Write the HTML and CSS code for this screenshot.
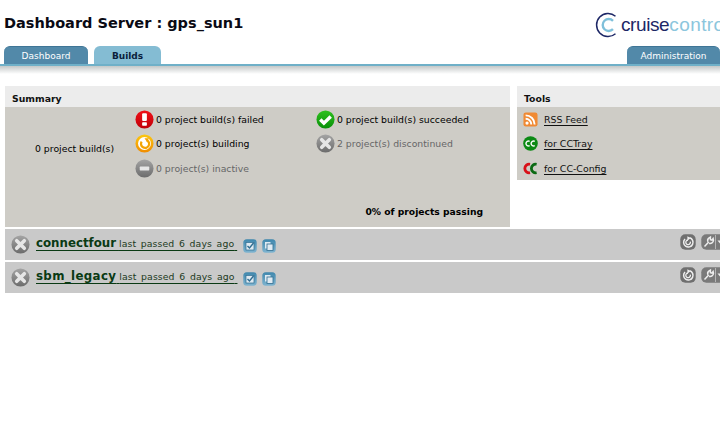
FILE: index.html
```html
<!DOCTYPE html>
<html lang="en">
<head>
<meta charset="utf-8">
<title>Dashboard Server : gps_sun1</title>
<link rel="stylesheet" href="styles.css">
</head>
<body>
<svg class="defs" width="0" height="0" aria-hidden="true">
  <defs>
    <linearGradient id="gRed" x1="0" y1="0" x2="0" y2="1"><stop offset="0" stop-color="#f01018"/><stop offset="1" stop-color="#c00008"/></linearGradient>
    <linearGradient id="gGreen" x1="0" y1="0" x2="0" y2="1"><stop offset="0" stop-color="#30c020"/><stop offset="1" stop-color="#089008"/></linearGradient>
    <linearGradient id="gOrange" x1="0" y1="0" x2="0" y2="1"><stop offset="0" stop-color="#fcc810"/><stop offset="1" stop-color="#f08c00"/></linearGradient>
    <linearGradient id="gGrey" x1="0" y1="0" x2="0" y2="1"><stop offset="0" stop-color="#a4a4a4"/><stop offset="1" stop-color="#6c6c6c"/></linearGradient>
    <linearGradient id="gBlue" x1="0" y1="0" x2="0" y2="1"><stop offset="0" stop-color="#3f87ad"/><stop offset="1" stop-color="#7fb4d0"/></linearGradient>
    <symbol id="i-fail" viewBox="0 0 20 20"><circle cx="10" cy="10" r="9.5" fill="url(#gRed)"/><rect x="7.500" y="3.500" width="5" height="8" rx="1" fill="#fff"/><rect x="7.500" y="13" width="5" height="3.500" rx=".8" fill="#fff"/></symbol>
    <symbol id="i-ok" viewBox="0 0 20 20"><circle cx="10" cy="10" r="9.5" fill="url(#gGreen)"/><path d="M4.500 10l3.800 3.800L15.500 6.800" fill="none" stroke="#fff" stroke-width="3.600"/></symbol>
    <symbol id="i-build" viewBox="0 0 20 20"><circle cx="10" cy="10" r="9.5" fill="url(#gOrange)"/><circle cx="10" cy="10" r="6.800" fill="#fff"/><path d="M12.500 6.500A4.300 4.300 0 1 1 7 8" fill="none" stroke="#f4a404" stroke-width="2.400"/><path d="M10 4.500l4.500 0-1.500 4.500z" fill="#f4a404"/></symbol>
    <symbol id="i-stop" viewBox="0 0 20 20"><circle cx="10" cy="10" r="9.5" fill="url(#gGrey)"/><path d="M6 6l8 8M14 6l-8 8" stroke="#e6e6e6" stroke-width="3.800" stroke-linecap="round"/></symbol>
    <symbol id="i-inactive" viewBox="0 0 20 20"><circle cx="10" cy="10" r="9.5" fill="url(#gGrey)"/><rect x="5" y="8" width="10" height="4" rx=".6" fill="#e6e6e6"/></symbol>
    <symbol id="i-rss" viewBox="0 0 16 16"><rect x=".5" y=".5" width="15" height="15" rx="2.5" fill="#f08a34"/><circle cx="4.3" cy="11.8" r="1.7" fill="#fff"/><path d="M2.8 7.2a6 6 0 0 1 6 6M2.8 3.6a9.6 9.6 0 0 1 9.6 9.6" fill="none" stroke="#fff" stroke-width="2"/></symbol>
    <symbol id="i-cc" viewBox="0 0 14 14"><circle cx="7" cy="7" r="6.8" fill="#0c8a14"/><path d="M6.2 5a2.3 2.3 0 1 0 0 4M11 5a2.3 2.3 0 1 0 0 4" fill="none" stroke="#fff" stroke-width="1.3"/></symbol>
    <symbol id="i-ccc" viewBox="0 0 16 14"><path d="M7.500 2.500A4.600 4.600 0 1 0 7.500 11.500" fill="none" stroke="#d81018" stroke-width="3"/><path d="M14.500 2.500A4.600 4.600 0 1 0 14.500 11.500" fill="none" stroke="#0c6a14" stroke-width="3"/></symbol>
    <symbol id="i-results" viewBox="0 0 14 14"><rect x=".3" y=".3" width="13.4" height="13.4" rx="3.5" fill="url(#gBlue)"/><rect x="3" y="3.500" width="8" height="7.500" fill="#dfeaf2" stroke="#2f6d90" stroke-width=".7"/><path d="M4.500 7l2 2 4-5" fill="none" stroke="#2f6d90" stroke-width="1.400"/></symbol>
    <symbol id="i-copy" viewBox="0 0 14 14"><rect x=".3" y=".3" width="13.4" height="13.4" rx="3.5" fill="url(#gBlue)"/><rect x="3" y="3" width="5.500" height="6.500" fill="#dfeaf2"/><rect x="5" y="5" width="6" height="6.500" fill="#dfeaf2" stroke="#2f6d90" stroke-width=".8"/></symbol>
    <symbol id="i-force" viewBox="0 0 16 16"><rect x=".3" y=".3" width="15.4" height="15.4" rx="5" fill="#6f6f6f"/><path d="M9.600 3.800a4.700 4.700 0 1 1-4.600 1.200" fill="none" stroke="#eee" stroke-width="1.500"/><path d="M8 6a2.300 2.300 0 1 0 2.300 1.600" fill="none" stroke="#eee" stroke-width="1.300"/><path d="M7.400 2.300v4.400l3.200-2.600z" fill="#eee"/></symbol>
    <symbol id="i-config" viewBox="0 0 28 16"><rect x=".3" y=".3" width="27.4" height="15.4" rx="5" fill="#7a7a7a"/><path d="M3.500 12.500l4.200-4.500M7 7.800a3 3 0 0 1 .8-3.600l1.600-1v2.400l1.500.5 1.200-1.600.4 1.800a3.400 3.400 0 0 1-4.400 3" fill="none" stroke="#eee" stroke-width="1.500"/><path d="M14.500 1v14" stroke="#c4c4c4" stroke-width=".8"/><path d="M16.500 6.500h5l-2.500 3z" fill="#eee"/></symbol>
  </defs>
</svg>

<header class="masthead">
  <h1 class="title">Dashboard Server : gps_sun1</h1>
  <div class="logo">
    <svg class="logo-mark" width="26" height="26" viewBox="0 0 26 26" aria-hidden="true">
      <path d="M20.500 4.200A11.500 11.500 0 1 0 20.500 21.800" fill="none" stroke="#1d2766" stroke-width="1.500"/>
      <path d="M18 8.800A6 6 0 1 0 18 17.200" fill="none" stroke="#7fc0da" stroke-width="2.400"/>
    </svg>
    <span class="logo-text"><span class="logo-cruise">cruise</span><span class="logo-control">control</span></span>
  </div>
</header>

<nav class="tabs">
  <a class="tab tab-dark tab-dashboard">Dashboard</a>
  <a class="tab tab-active">Builds</a>
  <a class="tab tab-dark tab-admin">Administration</a>
</nav>
<div class="tab-rule"></div>

<main class="content">
  <div class="panels">
    <section class="panel summary">
      <h2 class="panel-head">Summary</h2>
      <div class="summary-body">
        <div class="total">0 project build(s)</div>
        <ul class="stat-col stat-col-a">
          <li class="stat"><svg class="stat-icon"><use href="#i-fail"/></svg>0 project build(s) failed</li>
          <li class="stat"><svg class="stat-icon"><use href="#i-build"/></svg>0 project(s) building</li>
          <li class="stat muted"><svg class="stat-icon"><use href="#i-inactive"/></svg>0 project(s) inactive</li>
        </ul>
        <ul class="stat-col stat-col-b">
          <li class="stat"><svg class="stat-icon"><use href="#i-ok"/></svg>0 project build(s) succeeded</li>
          <li class="stat muted"><svg class="stat-icon"><use href="#i-stop"/></svg>2 project(s) discontinued</li>
        </ul>
      </div>
      <div class="passing">0% of projects passing</div>
    </section>
    <section class="panel tools">
      <h2 class="panel-head">Tools</h2>
      <ul class="tool-list">
        <li class="tool"><svg class="tool-icon"><use href="#i-rss"/></svg><a class="tool-link">RSS Feed</a></li>
        <li class="tool"><svg class="tool-icon"><use href="#i-cc"/></svg><a class="tool-link">for CCTray</a></li>
        <li class="tool"><svg class="tool-icon"><use href="#i-ccc"/></svg><a class="tool-link">for CC-Config</a></li>
      </ul>
    </section>
  </div>

  <div class="project">
    <svg class="project-status"><use href="#i-stop"/></svg>
    <a class="project-link"><span class="project-name">connectfour</span> <span class="project-meta">last passed 6 days ago</span>&nbsp;</a>
    <svg class="mini"><use href="#i-results"/></svg>
    <svg class="mini"><use href="#i-copy"/></svg>
    <div class="project-actions">
      <svg class="act-force"><use href="#i-force"/></svg>
      <svg class="act-config"><use href="#i-config"/></svg>
    </div>
  </div>
  <div class="project">
    <svg class="project-status"><use href="#i-stop"/></svg>
    <a class="project-link"><span class="project-name project-name-wide">sbm_legacy</span> <span class="project-meta">last passed 6 days ago</span>&nbsp;</a>
    <svg class="mini"><use href="#i-results"/></svg>
    <svg class="mini"><use href="#i-copy"/></svg>
    <div class="project-actions">
      <svg class="act-force"><use href="#i-force"/></svg>
      <svg class="act-config"><use href="#i-config"/></svg>
    </div>
  </div>
</main>
</body>
</html>
```
FILE: styles.css
```css
* { box-sizing: border-box; }
html, body { margin: 0; padding: 0; height: 432px; overflow: hidden; background: #fff; }
body { width: 720px; font-family: "DejaVu Sans", Verdana, sans-serif; font-size: 9.3px; color: #000; }
ul { list-style: none; margin: 0; padding: 0; }
.defs { display: block; height: 0; }

.masthead { height: 46px; display: flex; justify-content: space-between; padding: 14px 0 0 4px; }
.title { margin: 0; font-size: 14.5px; line-height: 19px; font-weight: 700; color: #0a0a14; white-space: nowrap; }
.logo { width: 125px; flex: none; display: flex; gap: 0; align-items: flex-start; margin-top: -2px; overflow: hidden; }
.logo-mark { flex: none; }
.logo-text { font-family: "Liberation Sans", Arial, sans-serif; font-size: 19px; line-height: 26px; letter-spacing: -.4px; white-space: nowrap; }
.logo-cruise { color: #1d2766; }
.logo-control { color: #8cc6dd; letter-spacing: .4px; }

.tabs { height: 18px; display: flex; gap: 6px; padding-left: 4px; }
.tab { height: 18px; font-size: 9px; line-height: 20px; text-align: center; border-radius: 6px 6px 0 0; }
.tab-dark { background: #5289a9; color: #fff; border-top: 1px solid #3f7596; line-height: 19px; }
.tab-dashboard { width: 84px; }
.tab-active { width: 67px; background: #84bcd3; color: #0a1e3c; font-weight: 700; }
.tab-admin { width: 93px; margin-left: auto; }
.tab-rule { height: 10px; border-top: 2px solid #6fb0c8; background: linear-gradient(#c4c8c8, #fff); }

.content { padding: 12px 0 0 5px; width: 760px; }
.panels { display: flex; gap: 7px; align-items: flex-start; margin-bottom: 2px; }
.panel { background: #ceccc6; border-radius: 3px 3px 0 0; }
.panel-head { margin: 0; height: 21px; padding: 7px 0 0 7px; background: #ececec; font-size: 9.3px; line-height: 12px; font-weight: 700; color: #111; }
.summary { width: 505px; height: 141px; display: flex; flex-direction: column; }
.summary-body { flex: 1; position: relative; display: flex; }
.total { width: 130px; padding: 36px 0 0 30px; line-height: 12px; white-space: nowrap; }
.stat-col-a { width: 181px; }
.stat { height: 24.5px; display: flex; align-items: center; gap: 2px; white-space: nowrap; }
.stat-icon { width: 19px; height: 19px; flex: none; }
.muted { color: #666; }
.passing { padding: 0 27px 9px 0; text-align: right; font-weight: 700; font-size: 9.2px; line-height: 12px; }

.tools { width: 240px; height: 94px; }
.tool { height: 24.5px; display: flex; align-items: center; gap: 6px; padding-left: 6px; }
.tool-icon { width: 15px; height: 15px; flex: none; }
.tool-link { color: #111; font-size: 9.4px; text-decoration: underline; text-underline-offset: 2px; }

.project { position: relative; height: 31px; margin-bottom: 2px; background: #c9c9c9; display: flex; align-items: center; padding-left: 6px; width: 715px; }
.project-status { width: 19px; height: 19px; flex: none; margin-right: 6px; }
.project-link { color: #0a3a14; text-decoration: underline; text-underline-offset: 3px; white-space: nowrap; margin-top: -3px; margin-right: 6px; }
.project-name { font-size: 11.8px; font-weight: 700; }
.project-name-wide { letter-spacing: .35px; }
.project-meta { font-size: 9.3px; letter-spacing: .1px; word-spacing: 1.6px; color: #1c3a22; }
.mini { width: 14px; height: 14px; flex: none; margin-right: 5px; margin-top: 2px; }
.project-actions { margin-left: auto; display: flex; gap: 5px; margin-top: -5px; margin-right: -9px; flex: none; }
.act-force { width: 16px; height: 16px; }
.act-config { width: 28px; height: 16px; }
```
